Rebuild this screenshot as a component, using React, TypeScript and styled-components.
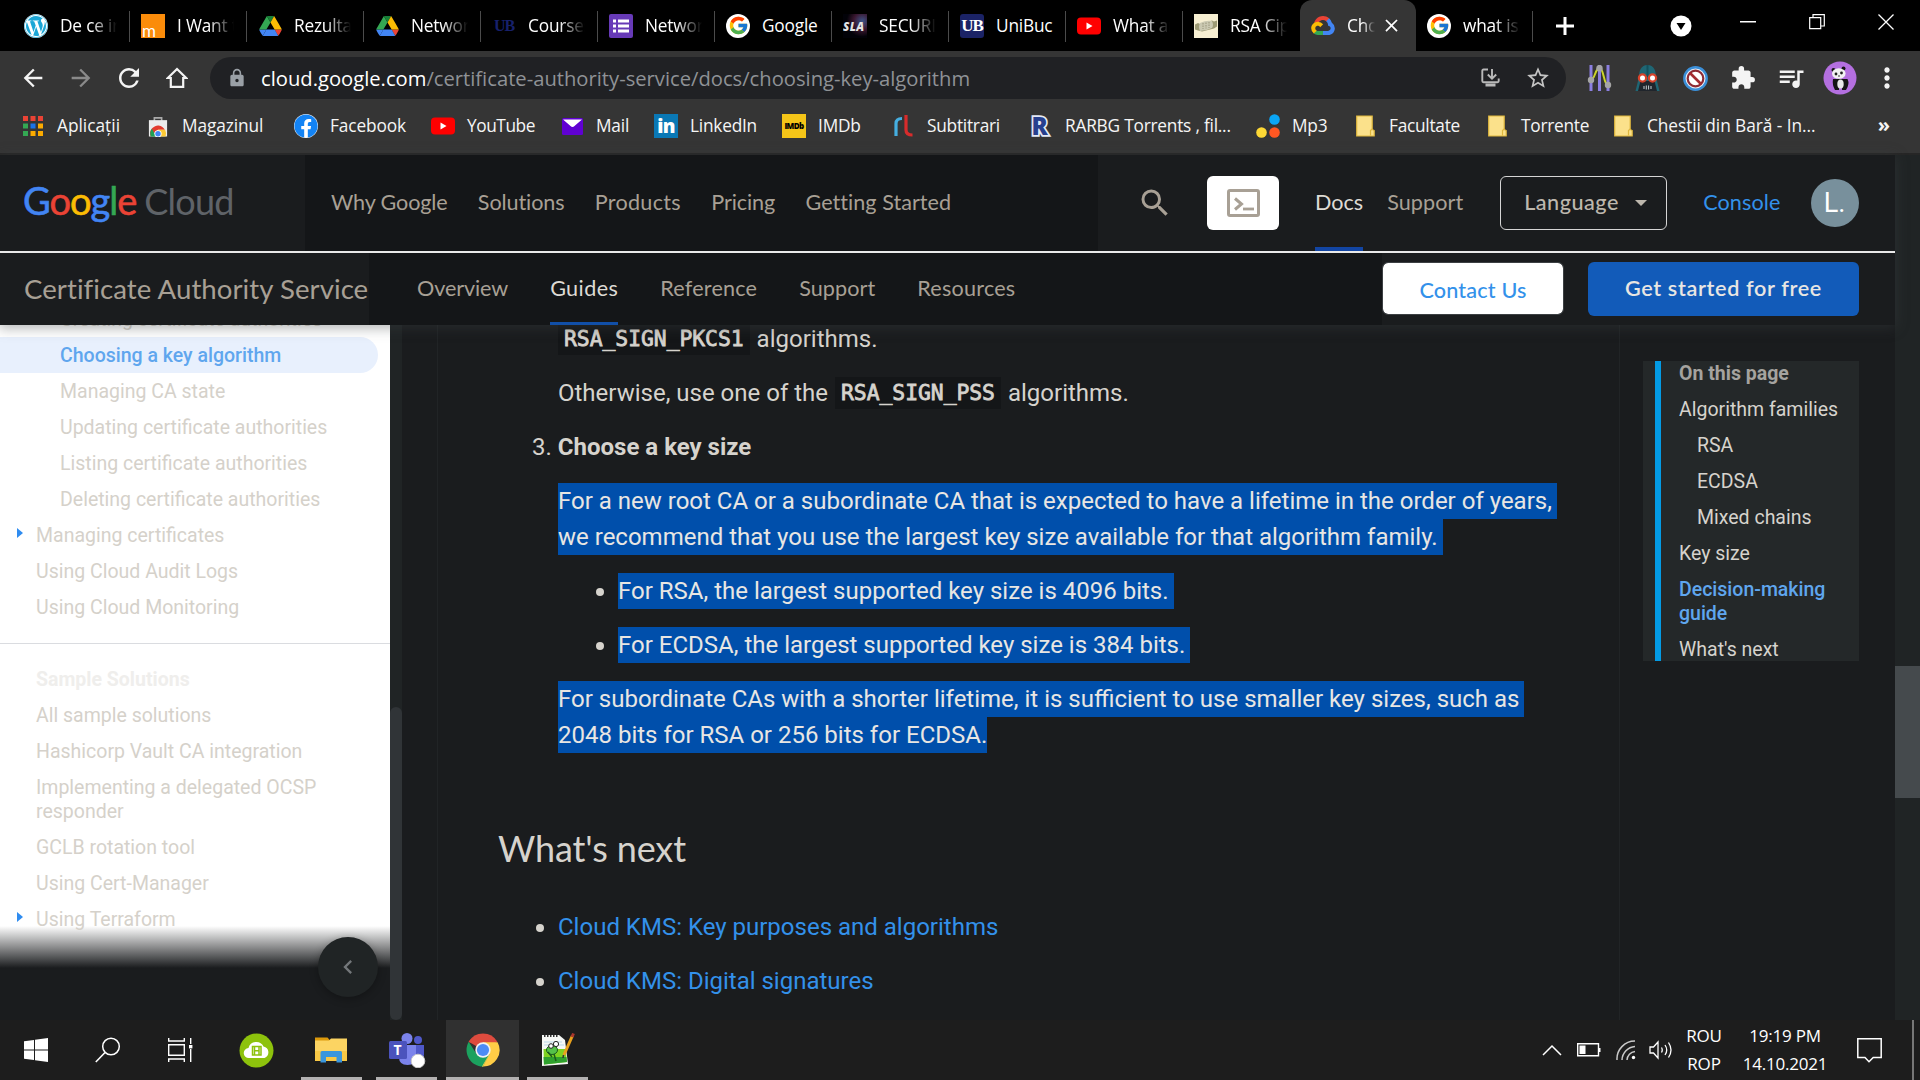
import React from 'react';
import styled, { createGlobalStyle, css } from 'styled-components';
import { FcGoogle } from 'react-icons/fc';
import { FaWordpress, FaFacebook } from 'react-icons/fa';
import {
  MdArrowBack, MdArrowForward, MdRefresh, MdLock, MdStarBorder, MdExtension, MdQueueMusic,
  MdMoreVert, MdSearch, MdClose, MdChevronLeft,
} from 'react-icons/md';

const uiFont = '"Open Sans", "Noto Sans", sans-serif';
const brandFont = '"Lato", "Open Sans", sans-serif';
const bodyFont = '"Roboto", "Liberation Sans", sans-serif';

const GlobalStyle = createGlobalStyle`
  * { box-sizing: border-box; }
  body { margin: 0; background: #1a1c1e; overflow: hidden; }
  p, h2, ul, ol { margin: 0; padding: 0; }
  svg { display: block; flex: none; }
`;

const Screen = styled.div`
  width: 1920px;
  height: 1080px;
  display: flex;
  flex-direction: column;
  overflow: hidden;
  background: #1a1c1e;
`;

const Spaced = styled.span<{ $ls?: number }>`
  letter-spacing: ${(p) => p.$ls ?? 0}px;
  white-space: nowrap;
`;

/* ---------- browser tabs ---------- */

const TabStrip = styled.div`
  height: 51px;
  flex: none;
  display: flex;
  padding-left: 13px;
  background: #000;
  color: #fff;
  font: 17.3px/24px ${uiFont};
`;

const Tab = styled.div<{ $active?: boolean; $line?: boolean }>`
  width: 117px;
  height: 51px;
  display: flex;
  align-items: center;
  padding-left: 11px;
  border-right: 1px solid transparent;
  ${(p) => p.$line && css`
    border-image: linear-gradient(transparent 12px, #4b4b4b 12px, #4b4b4b 41px, transparent 41px) 1;
  `}
  ${(p) => p.$active && css`
    width: 116px;
    background: #353535;
    border-radius: 12px 12px 0 0;
  `}
`;

const Favicon = styled.div`
  width: 24px;
  height: 24px;
  flex: none;
  display: flex;
  align-items: center;
  justify-content: center;
  margin-right: 12px;
`;

const TabTitle = styled.div<{ $w?: number; $full?: boolean }>`
  width: ${(p) => p.$w ?? 57}px;
  letter-spacing: -0.2px;
  white-space: nowrap;
  overflow: hidden;
  ${(p) => !p.$full && css`mask-image: linear-gradient(90deg, #000 55%, transparent 100%);`}
`;

const CloseSlot = styled.div`
  margin-left: 6px;
`;

const NewTab = styled.div`
  width: 64px;
  display: flex;
  align-items: center;
  justify-content: center;
`;

const WindowButtons = styled.div`
  margin-left: auto;
  display: flex;
  height: 51px;
`;

const WindowButton = styled.div<{ $w: number; $drop?: number }>`
  width: ${(p) => p.$w}px;
  display: flex;
  align-items: center;
  justify-content: center;
  padding-bottom: ${(p) => p.$drop ?? 7}px;
`;

const Square = styled.div<{ $bg: string; $fg?: string; $r?: number; $size?: number }>`
  width: 24px;
  height: 24px;
  display: flex;
  align-items: center;
  justify-content: center;
  overflow: hidden;
  border-radius: ${(p) => p.$r ?? 0}px;
  background: ${(p) => p.$bg};
  color: ${(p) => p.$fg ?? '#fff'};
  font: 700 ${(p) => p.$size ?? 14}px/24px "Liberation Serif", serif;
  letter-spacing: -1px;
`;

const OrangeM = styled(Square)`
  align-items: flex-end;
  justify-content: flex-start;
  font: 17px/15px ${brandFont};
  padding-left: 1px;
`;

const SansSquare = styled(Square)`
  font-family: "Open Sans", sans-serif;
  font-weight: 800;
  letter-spacing: -0.6px;
`;

const White = styled.div`
  width: 24px;
  height: 24px;
  border-radius: 50%;
  background: #fff;
  display: flex;
  align-items: center;
  justify-content: center;
`;

const DriveIcon = () => (
  <svg width="23" height="20" viewBox="0 0 87.3 78">
    <path fill="#4285f4" d="m6.6 66.85 3.85 6.65c.8 1.4 1.95 2.5 3.3 3.3l13.75-23.8h-27.5c0 1.55.4 3.1 1.2 4.5z" />
    <path fill="#34a853" d="m43.65 25-13.75-23.8c-1.35.8-2.5 1.9-3.3 3.3l-25.4 44a9.06 9.06 0 0 0 -1.2 4.5h27.5z" />
    <path fill="#ea4335" d="m73.55 76.8c1.35-.8 2.5-1.9 3.3-3.3l1.6-2.75 7.65-13.25c.8-1.4 1.2-2.95 1.2-4.5h-27.502l5.852 11.5z" />
    <path fill="#188038" d="m43.65 25 13.75-23.8c-1.35-.8-2.9-1.2-4.5-1.2h-18.5c-1.6 0-3.15.45-4.5 1.2z" />
    <path fill="#4285f4" d="m59.8 53h-32.3l-13.75 23.8c1.35.8 2.9 1.2 4.5 1.2h50.8c1.6 0 3.15-.45 4.5-1.2z" />
    <path fill="#fbbc04" d="m73.4 26.5-12.7-22c-.8-1.4-1.95-2.5-3.3-3.3l-13.75 23.8 16.15 28h27.45c0-1.55-.4-3.1-1.2-4.5z" />
  </svg>
);

const CloudIcon = () => (
  <svg width="24" height="19" viewBox="0 0 256 206">
    <path fill="#ea4335" d="M170.252 56.819l22.253-22.253 1.483-9.37C153.437-11.677 88.976-7.496 52.42 33.92 42.267 45.423 34.734 59.764 30.717 74.573l7.97-1.123 44.505-7.34 3.436-3.513c19.797-21.742 53.27-24.667 76.128-6.168z" />
    <path fill="#4285f4" d="M224.205 73.918a100.249 100.249 0 0 0-30.217-48.722l-31.232 31.232a55.515 55.515 0 0 1 20.379 44.037v5.544c15.35 0 27.797 12.445 27.797 27.796 0 15.352-12.446 27.573-27.797 27.573h-55.671l-5.466 5.934v33.34l5.466 5.231h55.67c39.93.311 72.553-31.494 72.864-71.424a72.303 72.303 0 0 0-31.793-60.541" />
    <path fill="#34a853" d="M71.87 205.796h55.593V161.29H71.87a27.275 27.275 0 0 1-11.477-2.498l-7.887 2.42-22.409 22.253-1.952 7.574c12.567 9.489 27.9 14.825 43.647 14.757" />
    <path fill="#fbbc05" d="M71.87 61.425C31.94 61.664-.237 94.228.001 134.158a72.301 72.301 0 0 0 28.222 56.88l32.248-32.246c-13.99-6.322-20.208-22.786-13.887-36.776 6.32-13.99 22.786-20.208 36.775-13.888a27.796 27.796 0 0 1 13.887 13.888l32.248-32.248A72.224 72.224 0 0 0 71.87 61.425" />
  </svg>
);

const YoutubeIcon = () => (
  <svg width="24" height="18" viewBox="0 0 24 18">
    <rect width="24" height="17" y=".5" rx="4" fill="#f00" />
    <path d="M9.500 5.500v7l6-3.500z" fill="#fff" />
  </svg>
);

const GoogleG = () => (
  <White><FcGoogle size={21} /></White>
);

const FormsIcon = () => (
  <svg width="24" height="24" viewBox="0 0 24 24">
    <rect width="24" height="24" rx="2" fill="#673ab7" />
    <path fill="#fff" d="M4 5.500h3v3H4zm5 0h11v3H9zM4 10.500h3v3H4zm5 0h11v3H9zM4 15.500h3v3H4zm5 0h11v3H9z" />
  </svg>
);

const SlaIcon = () => (
  <svg width="24" height="24" viewBox="0 0 24 24">
    <defs>
      <radialGradient id="sla" cx=".8" cy=".3" r=".65">
        <stop offset="0" stopColor="#3d5488" /><stop offset=".55" stopColor="#3a1730" /><stop offset="1" stopColor="#020208" />
      </radialGradient>
    </defs>
    <rect width="24" height="24" fill="url(#sla)" />
    <text x="0" y="16.500" fill="#e4e4e4" fontFamily="Open Sans, sans-serif" fontWeight="800" fontStyle="italic" fontSize="11.500" textLength="21">SLA</text>
  </svg>
);

const CipherIcon = () => (
  <svg width="24" height="24" viewBox="0 0 24 24">
    <rect width="24" height="24" fill="#f7efd2" />
    <path d="M1 10.500l3-1.500 2 1 12-3.500 2 1 3-1v6l-3 2-12 3-4-1-3-1z" fill="#9d9a74" />
    <path d="M6 9Q12 6 18 7q2 4 0 7-6 3-12 3-2-4 0-8z" fill="#cbc9b2" />
    <path d="M9 9v6M12 8.500v6M15 8v6" stroke="#8b8969" strokeWidth=".8" strokeDasharray="1.500 1" />
  </svg>
);

const tabs: { title: string; icon: React.ReactNode; full?: boolean }[] = [
  { title: 'De ce in', icon: <White><FaWordpress size={24} color="#1ba6d6" /></White> },
  { title: 'I Want t', icon: <OrangeM $bg="#fb8c0a">m</OrangeM> },
  { title: 'Rezultat', icon: <DriveIcon /> },
  { title: 'Network', icon: <DriveIcon /> },
  { title: 'Courses', icon: <Square $bg="#000" $fg="#17206b" $size={16}>UB</Square> },
  { title: 'Network', icon: <FormsIcon /> },
  { title: 'Google', icon: <GoogleG />, full: true },
  { title: 'SECURIT', icon: <SlaIcon /> },
  { title: 'UniBuc', icon: <Square $bg="#1b2366" $r={3} $size={17}>UB</Square>, full: true },
  { title: 'What ar', icon: <YoutubeIcon /> },
  { title: 'RSA Cip', icon: <CipherIcon /> },
];

const Tabs = () => (
  <TabStrip>
    {tabs.map((t, i) => (
      <Tab key={i} $line={i < tabs.length - 1}>
        <Favicon>{t.icon}</Favicon>
        <TabTitle $full={t.full} $w={t.full ? 62 : 57}>{t.title}</TabTitle>
      </Tab>
    ))}
    <Tab $active>
      <Favicon><CloudIcon /></Favicon>
      <TabTitle $w={28}>Cho</TabTitle>
      <CloseSlot><MdClose size={21} /></CloseSlot>
    </Tab>
    <Tab $line>
      <Favicon><GoogleG /></Favicon>
      <TabTitle>what is t</TabTitle>
    </Tab>
    <NewTab>
      <svg width="18" height="18" viewBox="0 0 18 18"><path d="M9 0v18M0 9h18" stroke="#fff" strokeWidth="3" /></svg>
    </NewTab>
    <WindowButtons>
      <WindowButton $w={64} $drop={0}>
        <svg width="22" height="22" viewBox="0 0 22 22"><circle cx="11" cy="11" r="10.500" fill="#fff" /><path d="M6.500 8h9L11 15z" fill="#000" /></svg>
      </WindowButton>
      <WindowButton $w={69}>
        <svg width="16" height="2"><rect width="16" height="1.500" fill="#fff" /></svg>
      </WindowButton>
      <WindowButton $w={69}>
        <svg width="16" height="16" viewBox="0 0 16 16"><path d="M.7 3.700h11v11h-11zM4 3.500V.7h11.300V12H12" fill="none" stroke="#fff" strokeWidth="1.200" /></svg>
      </WindowButton>
      <WindowButton $w={69}>
        <svg width="16" height="16" viewBox="0 0 16 16"><path d="M.5.5l15 15M15.500.5l-15 15" stroke="#fff" strokeWidth="1.300" /></svg>
      </WindowButton>
    </WindowButtons>
  </TabStrip>
);

/* ---------- address bar ---------- */

const Toolbar = styled.div`
  height: 54px;
  flex: none;
  display: flex;
  align-items: center;
  padding-left: 9px;
  background: #353535;
  color: #f4f4f4;
`;

const ToolButton = styled.div<{ $w?: number }>`
  width: ${(p) => p.$w ?? 48}px;
  flex: none;
  display: flex;
  align-items: center;
  justify-content: center;
`;

const Omnibox = styled.div`
  width: 1356px;
  height: 42px;
  margin-left: 9px;
  display: flex;
  align-items: center;
  padding: 0 4px 0 17px;
  border-radius: 21px;
  background: #202124;
  color: #9aa0a6;
`;

const Url = styled.div`
  margin: 0 auto 0 14px;
  font: 20.2px/28px ${uiFont};
  color: #8f9296;
  white-space: nowrap;
  b { font-weight: 400; color: #fff; }
`;

const HomeIcon = () => (
  <svg width="22" height="22" viewBox="0 0 22 22"><path d="M1.800 11L11 2l9.200 9h-3v8.800H4.800V11z" fill="none" stroke="#f4f4f4" strokeWidth="2.200" /></svg>
);

const InstallIcon = () => (
  <svg width="19" height="20" viewBox="0 0 19 20">
    <path d="M7 1.500H2.500q-1.200 0-1.200 1.200V13q0 1.200 1.200 1.200h14q1.200 0 1.200-1.200v-2.500" fill="none" stroke="#b9b9b9" strokeWidth="1.900" />
    <path d="M11 1v9M6.800 6.500L11 10.700l4.200-4.200" fill="none" stroke="#b9b9b9" strokeWidth="1.900" />
    <path d="M4.500 15.500h10v3h-10z" fill="#b9b9b9" />
  </svg>
);

const SlidersIcon = () => (
  <svg width="25" height="26" viewBox="0 0 25 26">
    <path d="M4 0v26M12.500 0v26M21 0v26" stroke="#8b7fe0" strokeWidth="3" />
    <path d="M4 15C8 15 8 3 12.500 3s4 17 8.500 17" fill="none" stroke="#cdd62a" strokeWidth="2" />
    <circle cx="4" cy="15" r="3.200" fill="#a5a5a5" /><circle cx="12.500" cy="3.200" r="3.200" fill="#a5a5a5" /><circle cx="21" cy="20" r="3.200" fill="#a5a5a5" />
  </svg>
);

const VaderIcon = () => (
  <svg width="25" height="26" viewBox="0 0 25 26">
    <path d="M12.500 0C6 0 4 6 4 12L.5 26h24L21 12c0-6-2-12-8.500-12z" fill="#1f6674" />
    <path d="M5.500 16h14L22 26H3z" fill="#20252c" />
    <path d="M12.500 0v12" stroke="#15505c" strokeWidth="2" />
    <circle cx="7.500" cy="13" r="3.600" fill="#fff" stroke="#d8432b" strokeWidth="2.200" /><circle cx="17.500" cy="13" r="3.600" fill="#fff" stroke="#d8432b" strokeWidth="2.200" />
    <path d="M9 21v3M11.300 20.500v4M13.600 20.500v4M16 21v3" stroke="#c6d0d3" strokeWidth="1" />
  </svg>
);

const BlockIcon = () => (
  <svg width="25" height="25" viewBox="0 0 25 25">
    <circle cx="12.500" cy="12.500" r="11.200" fill="#e8eef5" stroke="#3b8fd8" strokeWidth="2.400" />
    <circle cx="12.500" cy="12.500" r="7.800" fill="#fff" stroke="#8e2a33" strokeWidth="2.200" />
    <path d="M7 7l11 11" stroke="#a32c30" strokeWidth="2.600" />
  </svg>
);

const PandaAvatar = () => (
  <svg width="34" height="34" viewBox="0 0 34 34">
    <circle cx="17" cy="17" r="16.500" fill="#b46fe0" />
    <path d="M10 18q-1 6 2 11h4v-2h3v2h4q4-6 1.500-11z" fill="#151515" />
    <ellipse cx="17.500" cy="23" rx="3.200" ry="4.500" fill="#e9e9e9" />
    <circle cx="10.500" cy="9" r="2" fill="#151515" /><circle cx="20.500" cy="7.500" r="2" fill="#151515" />
    <ellipse cx="15.800" cy="12.500" rx="6.800" ry="5.300" fill="#f2f2f2" />
    <circle cx="13" cy="13" r="1.400" fill="#222" /><circle cx="18.500" cy="12" r="1.400" fill="#222" /><circle cx="16" cy="15" r=".8" fill="#222" />
  </svg>
);

const AddressBar = () => (
  <Toolbar>
    <ToolButton><MdArrowBack size={28} /></ToolButton>
    <ToolButton><MdArrowForward size={28} color="#8a8a8a" /></ToolButton>
    <ToolButton><MdRefresh size={30} /></ToolButton>
    <ToolButton><HomeIcon /></ToolButton>
    <Omnibox>
      <MdLock size={20} />
      <Url><b>cloud.google.com</b>/certificate-authority-service/docs/choosing-key-algorithm</Url>
      <ToolButton><InstallIcon /></ToolButton>
      <ToolButton $w={48}><MdStarBorder size={26} color="#c4c4c4" /></ToolButton>
    </Omnibox>
    <ToolButton $w={66}><SlidersIcon /></ToolButton>
    <ToolButton $w={30}><VaderIcon /></ToolButton>
    <ToolButton $w={66}><BlockIcon /></ToolButton>
    <ToolButton $w={30}><MdExtension size={26} /></ToolButton>
    <ToolButton $w={66}><MdQueueMusic size={30} /></ToolButton>
    <ToolButton $w={32}><PandaAvatar /></ToolButton>
    <ToolButton $w={62}><MdMoreVert size={32} /></ToolButton>
  </Toolbar>
);

/* ---------- bookmarks ---------- */

const BookmarkBar = styled.div`
  height: 50px;
  flex: none;
  display: flex;
  align-items: center;
  padding: 0 0 9px 21px;
  background: #353535;
  border-bottom: 2px solid #262626;
  color: #f5f5f5;
  font: 17.3px/24px ${uiFont};
`;

const Bookmark = styled.div<{ $w: number }>`
  width: ${(p) => p.$w}px;
  display: flex;
  align-items: center;
  padding-top: 3px;
`;

const More = styled.div`
  margin: 0 30px 0 auto;
  font: 700 20px/24px ${uiFont};
`;

const AppsIcon = () => {
  const colors = ['#ea4335', '#ea4335', '#ea4335', '#34a853', '#1a73e8', '#fbab00', '#34a853', '#fbab00', '#fbab00'];
  return (
    <svg width="20" height="20" viewBox="0 0 20 20">
      {colors.map((c, i) => <rect key={i} x={(i % 3) * 7.5} y={Math.floor(i / 3) * 7.5} width="5" height="5" fill={c} />)}
    </svg>
  );
};

const StoreIcon = () => (
  <svg width="20" height="21" viewBox="0 0 22 22">
    <path d="M7 5V1.500h8V5" fill="none" stroke="#aaa" strokeWidth="1.800" />
    <path d="M1 4h20v18H1z" fill="#ececec" />
    <path d="M3 22a8.500 8.500 0 0 1 1.500-9 8.500 8.500 0 0 1 14 1.500H11z" fill="#e33b2e" />
    <path d="M3 22a9 9 0 0 1 1.300-8.500L9 22z" fill="#1fa055" /><path d="M11 14.500h7.800A9 9 0 0 1 19.300 22H11z" fill="#fcc934" />
    <circle cx="11" cy="19" r="4" fill="#fff" /><circle cx="11" cy="19" r="3" fill="#4285f4" />
  </svg>
);

const MailIcon = () => (
  <svg width="21" height="17" viewBox="0 0 21 17">
    <rect width="21" height="17" rx="1.500" fill="#6001d2" /><path d="M1 1.500h19l-7.500 6.500a3 3 0 0 1-4 0z" fill="#fff" />
  </svg>
);

const FolderIcon = () => (
  <svg width="19" height="22" viewBox="0 0 19 22">
    <path d="M.7 1h15.500v13.500l2 1V21H.7z" fill="#fbe18b" stroke="#dfb73d" strokeWidth="1.200" />
    <path d="M14.500 20.500v-5l1.700-1.500" fill="none" stroke="#dfb73d" strokeWidth="1.200" />
  </svg>
);

const RlIcon = () => (
  <svg width="21" height="24" viewBox="0 0 21 24">
    <path d="M3 22V9.500Q3 4.500 9 4.500" fill="none" stroke="#45aee0" strokeWidth="3.200" />
    <path d="M13 1v15q0 5 6.500 5" fill="none" stroke="#d82c2c" strokeWidth="3.200" />
  </svg>
);

const RarbgIcon = () => (
  <svg width="24" height="24" viewBox="0 0 24 24">
    <text x="2.500" y="20.500" fontFamily="Open Sans, sans-serif" fontWeight="800" fontSize="24" fill="#27408e" stroke="#e4e9f5" strokeWidth="3.500" paintOrder="stroke">R</text>
  </svg>
);

const DotsIcon = () => (
  <svg width="24" height="24" viewBox="0 0 24 24">
    <circle cx="18.500" cy="5.500" r="5.300" fill="#0aa5f5" /><circle cx="5.500" cy="18.500" r="5.300" fill="#fdd835" /><circle cx="18.500" cy="18.500" r="5.300" fill="#ff5722" />
  </svg>
);

const bookmarks: { label: string; w: number; ls: number; icon: React.ReactNode }[] = [
  { label: 'Aplicații', w: 125, ls: 0, icon: <AppsIcon /> },
  { label: 'Magazinul', w: 148, ls: -0.1, icon: <StoreIcon /> },
  { label: 'Facebook', w: 137, ls: -0.12, icon: <White><FaFacebook size={24} color="#1383f4" /></White> },
  { label: 'YouTube', w: 129, ls: -0.44, icon: <YoutubeIcon /> },
  { label: 'Mail', w: 94, ls: -0.2, icon: <MailIcon /> },
  { label: 'LinkedIn', w: 128, ls: -0.22, icon: <SansSquare $bg="#0a78b5" $size={19}>in</SansSquare> },
  { label: 'IMDb', w: 109, ls: -0.2, icon: <SansSquare $bg="#f5c518" $fg="#000" $size={8}>IMDb</SansSquare> },
  { label: 'Subtitrari', w: 138, ls: -0.25, icon: <RlIcon /> },
  { label: 'RARBG Torrents , fil...', w: 227, ls: -0.22, icon: <RarbgIcon /> },
  { label: 'Mp3', w: 97, ls: -0.2, icon: <DotsIcon /> },
  { label: 'Facultate', w: 132, ls: -0.27, icon: <FolderIcon /> },
  { label: 'Torrente', w: 126, ls: -0.25, icon: <FolderIcon /> },
  { label: 'Chestii din Bară - In...', w: 210, ls: -0.06, icon: <FolderIcon /> },
];

const Bookmarks = () => (
  <BookmarkBar>
    {bookmarks.map((b) => (
      <Bookmark key={b.label} $w={b.w}><Favicon>{b.icon}</Favicon><Spaced $ls={b.ls}>{b.label}</Spaced></Bookmark>
    ))}
    <More>»</More>
  </BookmarkBar>
);

/* ---------- site header ---------- */

const Viewport = styled.div`
  height: 865px;
  flex: none;
  display: flex;
`;

const Page = styled.div`
  width: 1895px;
  display: flex;
  flex-direction: column;
`;

const PageScrollbar = styled.div`
  width: 25px;
  padding-top: 511px;
  background: #202425;
`;

const PageThumb = styled.div`
  height: 132px;
  background: #454a4d;
`;

const SiteHeader = styled.header`
  position: relative;
  z-index: 2;
  flex: none;
  background: #1a1c1e;
  box-shadow: 0 2px 12px 1px rgba(60, 64, 67, 0.4);
  color: #a8a095;
  font: 21.6px/30px ${brandFont};
`;

const HeaderText = styled(Spaced)`
  padding-bottom: 2px;
`;

const TopRow = styled.div`
  height: 98px;
  display: flex;
  border-bottom: 2px solid #e9e9e9;
`;

const LogoArea = styled.div`
  width: 305px;
  display: flex;
  align-items: baseline;
  padding: 20px 0 0 23px;
  font-size: 38px;
  line-height: 50px;
`;

const Google = styled.span`
  letter-spacing: -1px;
  -webkit-text-stroke: 0.6px currentColor;
  margin-right: 8px;
`;

const Letter = styled.span<{ $c: string }>`
  color: ${(p) => p.$c};
  -webkit-text-stroke-color: ${(p) => p.$c};
`;

const CloudWord = styled.span`
  color: #5f6368;
  font-size: 36px;
  letter-spacing: -0.8px;
`;

const MainNav = styled.nav`
  width: 793px;
  display: flex;
  align-items: center;
  gap: 30.4px;
  padding-left: 26px;
  background: #141618;
`;

const HeaderTools = styled.div`
  flex: 1;
  display: flex;
  align-items: center;
  padding-left: 39px;
`;

const ShellButton = styled.div`
  width: 72px;
  height: 54px;
  margin: 0 36px 0 34px;
  border-radius: 6px;
  background: #fff;
  display: flex;
  align-items: center;
  justify-content: center;
`;

const CurrentLink = styled.div<{ $line: string; $thick: number }>`
  align-self: stretch;
  display: flex;
  align-items: center;
  color: #dedbd5;
  padding-top: ${(p) => p.$thick}px;
  border-bottom: ${(p) => p.$thick}px solid ${(p) => p.$line};
`;

const Language = styled.div`
  width: 167px;
  height: 54px;
  margin: 0 36px 0 37px;
  padding-left: 23px;
  display: flex;
  align-items: center;
  gap: 16px;
  border: 1px solid #d5d5d5;
  border-radius: 6px;
  color: #bdb7ad;
  font-weight: 500;
`;

const SupportSlot = styled.div`
  display: flex;
  margin-left: 24px;
`;

const ConsoleLink = styled.div`
  display: flex;
  color: #3391ea;
  margin-right: 30px;
`;

const Avatar = styled.div`
  width: 48px;
  height: 48px;
  border-radius: 50%;
  background: #78909c;
  color: #fff;
  font: 27px/48px ${bodyFont};
  text-align: center;
`;

const ProductRow = styled.div`
  height: 72px;
  display: flex;
`;

const ProductName = styled.div`
  width: 369px;
  padding-left: 24px;
  font-size: 27.6px;
  line-height: 71px;
`;

const ProductTabs = styled.nav`
  width: 1013px;
  display: flex;
  align-items: center;
  gap: 42px;
  padding-left: 48px;
  background: #141618;
`;

const Contact = styled.div`
  width: 182px;
  height: 53px;
  margin: 9px 24px 0 0;
  border: 1px solid #3c4043;
  border-radius: 6px;
  background: #fff;
  background-clip: padding-box;
  color: #3391ea;
  font-weight: 500;
  line-height: 54px;
  text-align: center;
`;

const Start = styled.div`
  width: 271px;
  height: 54px;
  margin-top: 9px;
  border-radius: 6px;
  background: #125bb9;
  color: #e8e6e3;
  font-weight: 600;
  line-height: 53px;
  text-align: center;
`;

const Header = () => (
  <SiteHeader>
    <TopRow>
      <LogoArea>
        <Google>
          <Letter $c="#4285f4">G</Letter><Letter $c="#ea4335">o</Letter><Letter $c="#fbbc04">o</Letter>
          <Letter $c="#4285f4">g</Letter><Letter $c="#34a853">l</Letter><Letter $c="#ea4335">e</Letter>
        </Google>
        <CloudWord>Cloud</CloudWord>
      </LogoArea>
      <MainNav>
        <HeaderText $ls={-0.15}>Why Google</HeaderText>
        <HeaderText $ls={-0.11}>Solutions</HeaderText>
        <HeaderText $ls={0.25}>Products</HeaderText>
        <HeaderText $ls={-0.09}>Pricing</HeaderText>
        <HeaderText $ls={0.02}>Getting Started</HeaderText>
      </MainNav>
      <HeaderTools>
        <MdSearch size={36} />
        <ShellButton>
          <svg width="33" height="28" viewBox="0 0 33 28">
            <rect x="1.500" y="1.500" width="30" height="25" rx="1.500" fill="none" stroke="#a8a095" strokeWidth="3" />
            <path d="M8 9.500l6.500 5.500L8 20.500" fill="none" stroke="#a8a095" strokeWidth="3" />
            <path d="M16 20h11" stroke="#a8a095" strokeWidth="2.800" />
          </svg>
        </ShellButton>
        <CurrentLink $line="#1245a3" $thick={4}><HeaderText $ls={0}>Docs</HeaderText></CurrentLink>
        <SupportSlot><HeaderText $ls={0.06}>Support</HeaderText></SupportSlot>
        <Language>
          <HeaderText $ls={0.5}>Language</HeaderText>
          <svg width="12" height="6" viewBox="0 0 12 6"><path d="M0 0h12L6 6z" fill="#bdb7ad" /></svg>
        </Language>
        <ConsoleLink><HeaderText $ls={0.1}>Console</HeaderText></ConsoleLink>
        <Avatar>L.</Avatar>
      </HeaderTools>
    </TopRow>
    <ProductRow>
      <ProductName><Spaced $ls={0.06}>Certificate Authority Service</Spaced></ProductName>
      <ProductTabs>
        <HeaderText $ls={-0.1}>Overview</HeaderText>
        <CurrentLink $line="#114fa8" $thick={3}><HeaderText $ls={0.4}>Guides</HeaderText></CurrentLink>
        <HeaderText $ls={0.21}>Reference</HeaderText>
        <HeaderText $ls={0.06}>Support</HeaderText>
        <HeaderText $ls={0.23}>Resources</HeaderText>
      </ProductTabs>
      <Contact><Spaced $ls={0.16}>Contact Us</Spaced></Contact>
      <Start><Spaced $ls={0.65}>Get started for free</Spaced></Start>
    </ProductRow>
  </SiteHeader>
);

/* ---------- side navigation ---------- */

const Body = styled.div`
  height: 695px;
  display: flex;
`;

const SideNav = styled.aside`
  position: relative;
  width: 390px;
  overflow: hidden;
  background: linear-gradient(#fff 601px, #1a1c1e 643px);
  color: #d5d1ca;
  font: 19.5px/24px ${bodyFont};
`;

const NavItem = styled.div<{ $deep?: boolean; $active?: boolean; $lines?: number }>`
  display: flex;
  width: 378px;
  height: ${(p) => (p.$lines === 2 ? 60 : 36)}px;
  padding: 7px 20px 0 ${(p) => (p.$deep ? 60 : 36)}px;
  ${(p) => p.$active && css`
    background: #e8f0fd;
    border-radius: 0 18px 18px 0;
    color: #5fa6ee;
    font-weight: 500;
  `}
`;

const NavTop = styled.div`
  margin-top: -24px;
  padding-bottom: 18px;
  border-bottom: 1px solid #dadce0;
`;

const NavBottom = styled.div`
  padding-top: 17px;
`;

const SectionTitle = styled(NavItem)`
  color: #efeeec;
  font-weight: 700;
`;

const Expand = styled.span`
  width: 0;
  height: 0;
  margin: 4px 13px 0 -19px;
  border: solid transparent;
  border-width: 5.5px 0 5.5px 6px;
  border-left-color: #2f8cf0;
`;

const CollapseButton = styled.div`
  position: absolute;
  left: 318px;
  bottom: 23px;
  width: 60px;
  height: 60px;
  border-radius: 50%;
  background: #202425;
  box-shadow: 0 2px 8px rgba(0, 0, 0, 0.3);
  color: #73777a;
  display: flex;
  align-items: center;
  justify-content: center;
`;

const NavScrollbar = styled.div`
  width: 12px;
  padding-top: 382px;
  background: #202425;
`;

const NavThumb = styled.div`
  height: 313px;
  border-radius: 6px;
  background: #303437;
`;

const SideNavigation = () => (
  <>
    <SideNav>
      <NavTop>
        <NavItem $deep>Creating certificate authorities</NavItem>
        <NavItem $deep $active>Choosing a key algorithm</NavItem>
        <NavItem $deep>Managing CA state</NavItem>
        <NavItem $deep>Updating certificate authorities</NavItem>
        <NavItem $deep>Listing certificate authorities</NavItem>
        <NavItem $deep>Deleting certificate authorities</NavItem>
        <NavItem><Expand />Managing certificates</NavItem>
        <NavItem>Using Cloud Audit Logs</NavItem>
        <NavItem>Using Cloud Monitoring</NavItem>
      </NavTop>
      <NavBottom>
        <SectionTitle>Sample Solutions</SectionTitle>
        <NavItem>All sample solutions</NavItem>
        <NavItem>Hashicorp Vault CA integration</NavItem>
        <NavItem $lines={2}>Implementing a delegated OCSP responder</NavItem>
        <NavItem>GCLB rotation tool</NavItem>
        <NavItem>Using Cert-Manager</NavItem>
        <NavItem><Expand />Using Terraform</NavItem>
      </NavBottom>
      <CollapseButton><MdChevronLeft size={28} /></CollapseButton>
    </SideNav>
    <NavScrollbar><NavThumb /></NavScrollbar>
  </>
);

/* ---------- article ---------- */

const Article = styled.main`
  width: 1183px;
  margin-left: 35px;
  padding-left: 60px;
  border-left: 1px solid #212426;
  border-right: 1px solid #212426;
  overflow: hidden;
  color: #d6d3cd;
  font: 24px/36px ${bodyFont};
  white-space: nowrap;
`;

const Steps = styled.div`
  margin-top: -4px;
  display: flex;
  flex-direction: column;
  gap: 18px;
`;

const Code = styled.code`
  display: inline-block;
  height: 32px;
  padding: 0 6px;
  background: #141618;
  font: 21.4px/32px "DejaVu Sans Mono", monospace;
  letter-spacing: -0.05px;
  -webkit-text-stroke: 0.8px currentColor;
  margin-top: 2px;
`;

const Line = styled.p`
  display: flex;
  gap: 7px;
`;

const StepTitle = styled.p`
  margin-left: -26px;
  b { margin-left: 6px; }
`;

const Selected = styled.span<{ $last?: boolean }>`
  display: block;
  width: fit-content;
  padding-right: ${(p) => (p.$last ? 0 : 5)}px;
  background: #004fab;
  color: #e8e6e3;
`;

const Inset = styled.div`
  padding-left: 60px;
`;

const BulletList = styled.div`
  padding-left: 60px;
  display: flex;
  flex-direction: column;
  gap: 18px;
`;

const Bullet = styled.div`
  display: flex;
  align-items: center;
  margin-left: -22px;
  gap: 14px;
  &::before {
    content: '';
    width: 8px;
    height: 8px;
    margin-top: 2px;
    border-radius: 50%;
    background: #d6d3cd;
  }
`;

const Heading = styled.h2`
  margin: 71px 0 37px;
  font: 36px/48px ${brandFont};
  letter-spacing: -0.12px;
`;

const Link = styled.a`
  color: #3391ea;
`;

const Content = () => (
  <Article>
    <Inset>
      <Steps>
        <Line><Code>RSA_SIGN_PKCS1</Code>algorithms.</Line>
        <Line>Otherwise, use one of the <Code>RSA_SIGN_PSS</Code>algorithms.</Line>
        <StepTitle>3.<b>Choose a key size</b></StepTitle>
        <p>
          <Selected>For a new root CA or a subordinate CA that is expected to have a lifetime in the order of years,</Selected>
          <Selected>we recommend that you use the largest key size available for that algorithm family.</Selected>
        </p>
        <BulletList>
          <Bullet><Selected>For RSA, the largest supported key size is 4096 bits.</Selected></Bullet>
          <Bullet><Selected>For ECDSA, the largest supported key size is 384 bits.</Selected></Bullet>
        </BulletList>
        <p>
          <Selected>For subordinate CAs with a shorter lifetime, it is sufficient to use smaller key sizes, such as</Selected>
          <Selected $last>2048 bits for RSA or 256 bits for ECDSA.</Selected>
        </p>
      </Steps>
    </Inset>
    <Heading>What&apos;s next</Heading>
    <BulletList>
      <Bullet><Link>Cloud KMS: Key purposes and algorithms</Link></Bullet>
      <Bullet><Link>Cloud KMS: Digital signatures</Link></Bullet>
    </BulletList>
  </Article>
);

/* ---------- table of contents ---------- */

const Toc = styled.aside`
  width: 216px;
  height: 300px;
  margin: 36px 0 0 23px;
  padding-left: 12px;
  overflow: hidden;
  background: #242829;
`;

const TocList = styled.div`
  height: 300px;
  padding: 1px 0 0 18px;
  border-left: 6px solid #039be5;
  color: #d6d3cd;
  font: 19.5px/24px ${bodyFont};
`;

const TocItem = styled.div<{ $sub?: boolean; $tone?: 'title' | 'active' }>`
  margin-bottom: 12px;
  padding-left: ${(p) => (p.$sub ? 18 : 0)}px;
  ${(p) => p.$tone === 'title' && css`font-weight: 700; color: #a5a39f;`}
  ${(p) => p.$tone === 'active' && css`font-weight: 500; color: #5fa6ee;`}
`;

const TableOfContents = () => (
  <Toc>
    <TocList>
      <TocItem $tone="title">On this page</TocItem>
      <TocItem>Algorithm families</TocItem>
      <TocItem $sub>RSA</TocItem>
      <TocItem $sub>ECDSA</TocItem>
      <TocItem $sub>Mixed chains</TocItem>
      <TocItem>Key size</TocItem>
      <TocItem $tone="active">Decision-making<br />guide</TocItem>
      <TocItem>What&apos;s next</TocItem>
    </TocList>
  </Toc>
);

/* ---------- taskbar ---------- */

const Taskbar = styled.footer`
  height: 60px;
  flex: none;
  display: flex;
  background: #1d1d1d;
  color: #fff;
  font: 17px/28px ${uiFont};
`;

const TaskButton = styled.div<{ $w?: number; $gap?: number; $active?: boolean; $open?: boolean; $inset?: number }>`
  width: ${(p) => p.$w ?? 72}px;
  margin-left: ${(p) => p.$gap ?? 0}px;
  display: flex;
  flex-direction: column;
  justify-content: space-between;
  align-items: center;
  background: ${(p) => (p.$active ? '#303030' : 'transparent')};
  &::before { content: ''; height: 3px; }
  &::after {
    content: '';
    width: calc(100% - ${(p) => (p.$inset ?? 7) * 2}px);
    height: 3px;
    background: ${(p) => (p.$open ? '#b3b1b1' : 'transparent')};
  }
`;

const Tray = styled.div`
  margin-left: auto;
  display: flex;
  align-items: center;
`;

const TrayIcon = styled.div<{ $w: number }>`
  width: ${(p) => p.$w}px;
  display: flex;
  justify-content: center;
`;

const TrayText = styled.div<{ $w: number }>`
  width: ${(p) => p.$w}px;
  text-align: center;
  letter-spacing: -0.2px;
`;

const ShowDesktop = styled.div`
  width: 8px;
  height: 60px;
  border-left: 2px solid #777;
`;

const ExplorerIcon = () => (
  <svg width="33" height="28" viewBox="0 0 33 28">
    <path d="M0 1.500h12.500l3 3.500H0z" fill="#dd9a0c" />
    <path d="M0 4.500h14l2-2h16V25H0z" fill="#fcd462" />
    <path d="M0 15h32v10H0z" fill="#f8c845" />
    <path d="M5.500 26.500V16.500q0-1.500 1.500-1.500h18.500q1.500 0 1.500 1.500v10h-5.500V21h-10.500v5.500z" fill="#3a96dd" />
  </svg>
);

const TeamsIcon = () => (
  <svg width="38" height="36" viewBox="0 0 38 36">
    <circle cx="30" cy="8" r="4" fill="#5059c9" /><path d="M25 13h11v10q0 5-6 5z" fill="#5059c9" />
    <circle cx="19" cy="6.500" r="5.500" fill="#7b83eb" /><path d="M11 13h17v11q0 9-8.500 9T11 25z" fill="#7b83eb" />
    <rect x="1" y="9" width="18" height="18" rx="1.500" fill="#4b53bc" />
    <text x="5.500" y="22.800" fontFamily="Open Sans, sans-serif" fontWeight="700" fontSize="14" fill="#fff">T</text>
    <circle cx="30" cy="29" r="6.800" fill="#fff" stroke="#c9c9c9" />
  </svg>
);

const ChromeIcon = () => (
  <svg width="34" height="34" viewBox="0 0 34 34">
    <path d="M17 17L2.700 8.800A16.500 16.500 0 0 1 31.300 8.800z" fill="#dd4b3e" />
    <path d="M17 17V9.300h14.600A16.500 16.500 0 0 1 16 33.500z" fill="#ffcd46" />
    <path d="M17 17l6.500 4L17 33.500A16.500 16.500 0 0 1 2.700 8.800l7.700 12z" fill="#1ba15e" />
    <path d="M23.600 20.900L17 33.500h-1l7-12z" fill="#ffcd46" />
    <path d="M17 9.300H3l-.3-.5L5 6h12z" fill="#dd4b3e" />
    <circle cx="17" cy="17" r="7.700" fill="#f1f1f1" /><circle cx="17" cy="17" r="6.100" fill="#4c8bf5" />
  </svg>
);

const NotepadIcon = () => (
  <svg width="34" height="34" viewBox="0 0 34 34">
    <path d="M1 2h17l6 5 3 24-26 2z" fill="#f6f8f5" />
    <path d="M2.500 16h22l1.500 13-23 2.500z" fill="#7ed321" /><path d="M2.500 24h23l.5 5-23 2.500z" fill="#2fa12e" />
    <path d="M3 3h14" stroke="#333" strokeWidth="2" strokeDasharray="1.500 1.500" /><path d="M3 9h18M3 12h20" stroke="#b9d7e8" />
    <ellipse cx="11" cy="17" rx="5.500" ry="4.500" fill="#55c14a" stroke="#1c5a1c" /><circle cx="15" cy="11" r="2.600" fill="#fff" stroke="#222" />
    <circle cx="10" cy="13" r="2.300" fill="#fff" stroke="#222" /><path d="M7 19l4 5M13 21l2 7" stroke="#1c5a1c" strokeWidth="1.500" />
    <path d="M23 22L31.500 2.500" stroke="#e9a11c" strokeWidth="3" /><path d="M31 4l1.500-3.500" stroke="#a8362c" strokeWidth="3" /><path d="M22 25l.5-3" stroke="#333" strokeWidth="1.500" />
  </svg>
);

const WindowsTaskbar = () => (
  <Taskbar>
    <TaskButton>
      <svg width="24" height="24" viewBox="0 0 24 24"><path fill="#fff" d="M0 3.300L10 2v9.500H0zM11 1.800L24 0v11.500H11zM0 12.500h10V22L0 20.700zM11 12.500h13V24l-13-1.800z" /></svg>
    </TaskButton>
    <TaskButton>
      <svg width="26" height="26" viewBox="0 0 26 26"><circle cx="16" cy="9.500" r="8.300" fill="none" stroke="#fff" strokeWidth="1.500" /><path d="M10 15.500L.8 25" stroke="#fff" strokeWidth="1.600" /></svg>
    </TaskButton>
    <TaskButton>
      <svg width="25" height="24" viewBox="0 0 25 24"><path d="M.7 0v3h15.600V0M.7 24v-3h15.600v3M.7 6.700h15.600v10.600H.7zM22.700 0v6M22.700 11v13" fill="none" stroke="#fff" strokeWidth="1.400" /><rect x="21" y="7" width="3.400" height="3.400" fill="#fff" /></svg>
    </TaskButton>
    <TaskButton $w={75} $gap={3}>
      <svg width="35" height="35" viewBox="0 0 35 35">
        <circle cx="17.500" cy="17.500" r="17" fill="#8dc20c" />
        <path d="M10 25a5 5 0 0 1-.5-10 8 8 0 0 1 15-1.500A6 6 0 0 1 25.500 25z" fill="#fff" />
        <path d="M13.500 13.500h8.500v8.500h-8.500zM15.500 13.500v8.500M20 13.500v8.500M15.500 17.700H20" fill="none" stroke="#8dc20c" strokeWidth="1.500" />
      </svg>
    </TaskButton>
    <TaskButton $w={75} $open><ExplorerIcon /></TaskButton>
    <TaskButton $w={75} $open><TeamsIcon /></TaskButton>
    <TaskButton $w={73} $gap={2} $open $active $inset={0}><ChromeIcon /></TaskButton>
    <TaskButton $w={75} $gap={1} $open><NotepadIcon /></TaskButton>
    <Tray>
      <TrayIcon $w={36}>
        <svg width="20" height="12" viewBox="0 0 20 12"><path d="M1 11l9-9 9 9" fill="none" stroke="#fff" strokeWidth="1.500" /></svg>
      </TrayIcon>
      <TrayIcon $w={38}>
        <svg width="24" height="14" viewBox="0 0 24 14"><path d="M.7.7h20.800v12.100H.7z" fill="none" stroke="#fff" strokeWidth="1.400" /><path d="M2.500 2.500h6v8.500h-6zM22 5h1.500v4H22z" fill="#fff" /></svg>
      </TrayIcon>
      <TrayIcon $w={36}>
        <svg width="20" height="20" viewBox="0 0 20 20"><path d="M1 20A18 18 0 0 1 19 1M6 20A14 14 0 0 1 19 6.500M11 20a9 9 0 0 1 8-8.500" fill="none" stroke="#c9c9c9" strokeWidth="1.500" /><circle cx="17.500" cy="17.500" r="1.700" fill="#fff" /></svg>
      </TrayIcon>
      <TrayIcon $w={33}>
        <svg width="24" height="20" viewBox="0 0 24 20"><path d="M1 7h3.500L9 2v16l-4.500-5H1zM12.500 7.500q1.500 2.500 0 5M16 5q3.500 5 0 10M19.500 2.500q5 7.500 0 15" fill="none" stroke="#fff" strokeWidth="1.300" /></svg>
      </TrayIcon>
      <TrayText $w={54}>ROU<br />ROP</TrayText>
      <TrayText $w={108}>19:19 PM<br />14.10.2021</TrayText>
      <TrayIcon $w={60}>
        <svg width="25" height="25" viewBox="0 0 25 25"><path d="M.8.8h23.400v18.600h-8L12 23.700l-4-4.300H.8z" fill="none" stroke="#fff" strokeWidth="1.500" /></svg>
      </TrayIcon>
      <TrayIcon $w={13} />
      <ShowDesktop />
    </Tray>
  </Taskbar>
);

export default function App() {
  return (
    <Screen>
      <GlobalStyle />
      <Tabs />
      <AddressBar />
      <Bookmarks />
      <Viewport>
        <Page>
          <Header />
          <Body>
            <SideNavigation />
            <Content />
            <TableOfContents />
          </Body>
        </Page>
        <PageScrollbar><PageThumb /></PageScrollbar>
      </Viewport>
      <WindowsTaskbar />
    </Screen>
  );
}
